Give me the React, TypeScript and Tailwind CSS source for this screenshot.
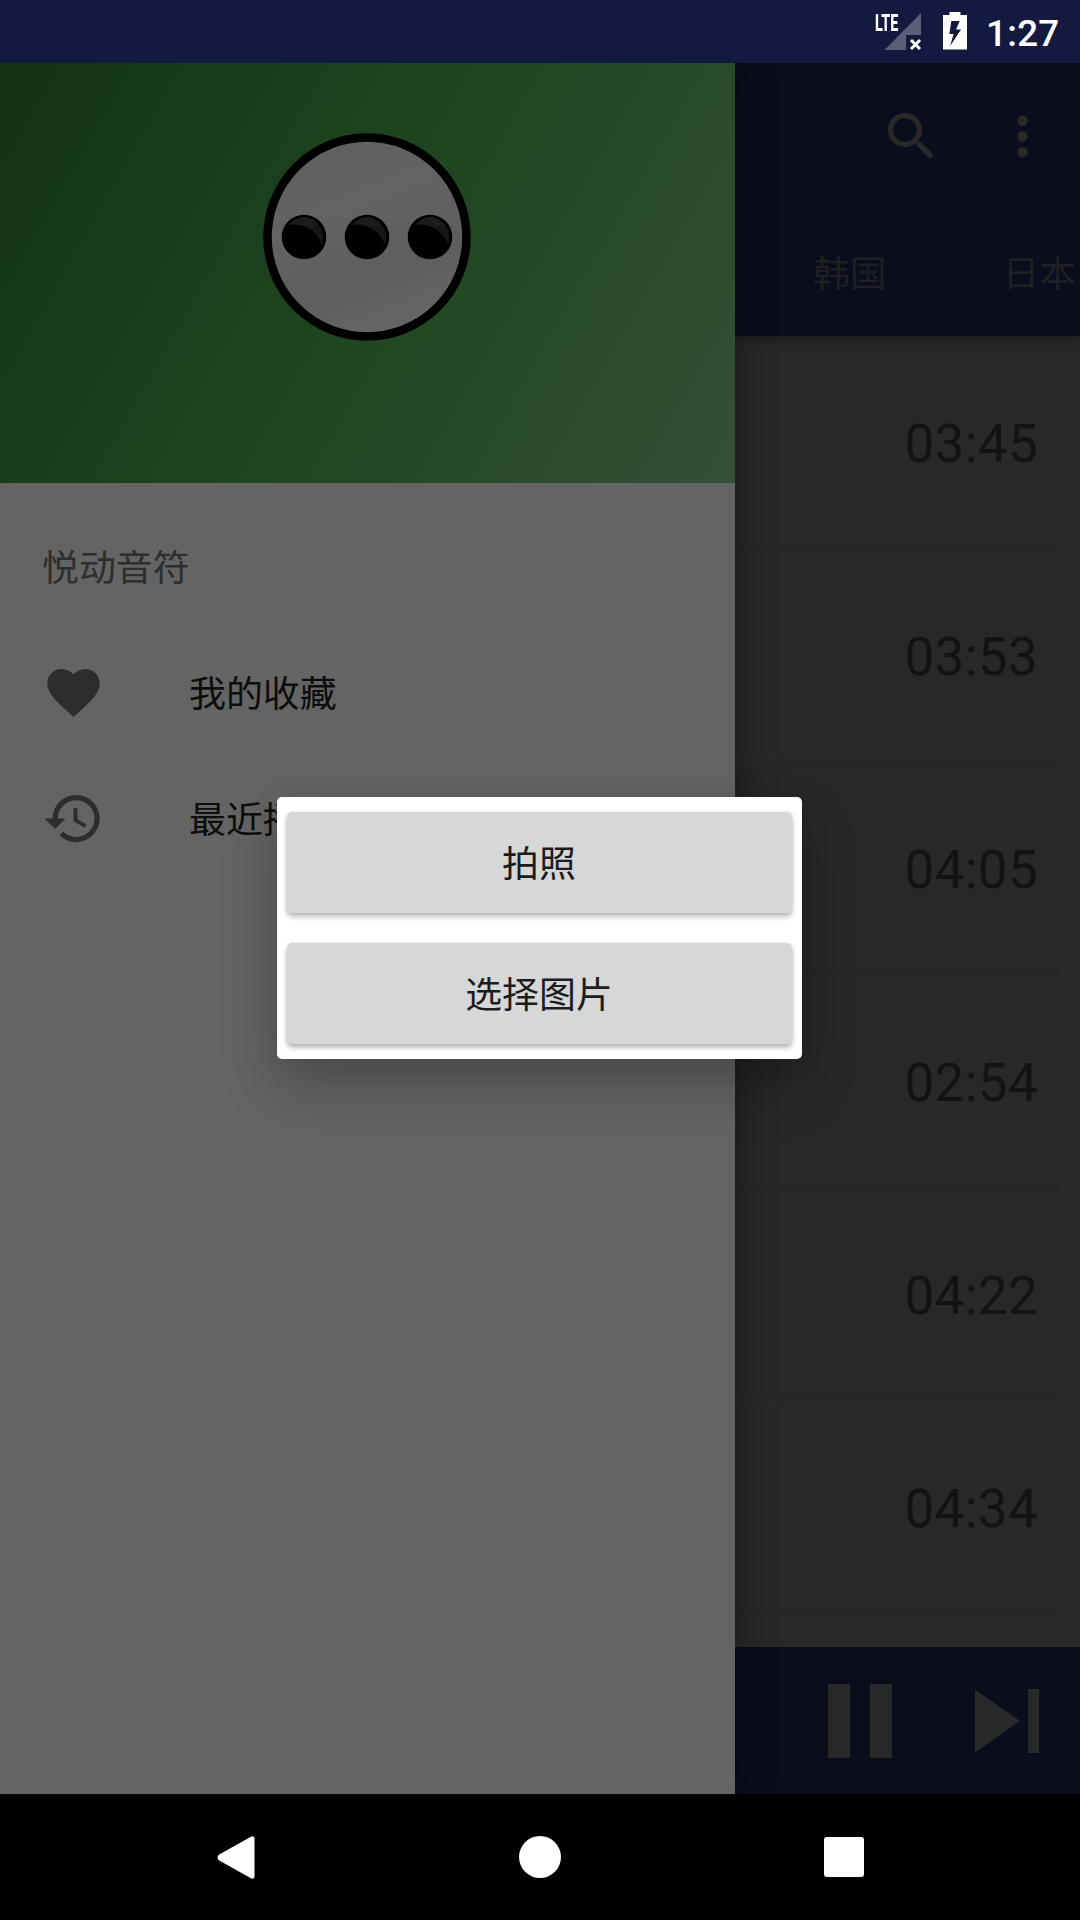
import React from "react";
import { MdFavorite, MdHistory, MdMoreVert, MdSearch } from "react-icons/md";

const durations = ["03:45", "03:53", "04:05", "02:54", "04:22", "04:34"];

function StatusBar() {
  return (
    <header className="flex h-[63px] shrink-0 items-center bg-[#141940] pl-[875px] text-white">
      <div className="relative h-[63px] w-[48px]">
        <svg className="absolute left-[9px] top-[13px]" width="38" height="38" viewBox="0 0 38 38">
          <path d="M0.500 37L37 0v22H22v15z" fill="#fff" fillOpacity="0.3" />
          <path d="M27 27l9 9M36 27l-9 9" stroke="#fff" strokeWidth="3" />
        </svg>
        <span className="absolute left-0 top-[10px] origin-left scale-x-[0.6] font-['Roboto'] text-[24px] font-extrabold leading-[26px]">
          LTE
        </span>
      </div>
      <svg className="ml-[20px] mt-[-1px]" width="24" height="38" viewBox="0 0 24 38">
        <path
          fillRule="evenodd"
          d="M6.500 0h11v3h6.500v34.500H0V3h6.500zM8.300 9L6.300 22h4.200L7.200 34L18 17.600h-4.900L16.700 9z"
          fill="#fff"
        />
      </svg>
      <span className="ml-[19px] mt-[4px] font-['Roboto'] text-[36.75px] font-medium leading-[42px] tracking-[0.3px]">
        1:27
      </span>
    </header>
  );
}

function Avatar() {
  return (
    <svg width="210" height="210" viewBox="0 0 210 210">
      <defs>
        <linearGradient id="face" x1="0.1" y1="0" x2="0.5" y2="1">
          <stop offset="0" stopColor="#5f5f5f" />
          <stop offset="0.4" stopColor="#636363" />
          <stop offset="0.75" stopColor="#5e5e5e" />
          <stop offset="1" stopColor="#656565" />
        </linearGradient>
        <linearGradient id="shine" x1="0" y1="0" x2="0.4" y2="1">
          <stop offset="0" stopColor="#222" />
          <stop offset="1" stopColor="#121212" />
        </linearGradient>
        <filter id="soften">
          <feGaussianBlur stdDeviation="0.6" />
        </filter>
      </defs>
      <circle cx="105" cy="105" r="99.500" fill="url(#face)" stroke="#000" strokeWidth="8.500" />
      {[42, 105, 168].map((cx) => (
        <g key={cx} filter="url(#soften)">
          <circle cx={cx} cy="105" r="22.300" fill="#000" />
          <path
            d={`M${cx - 15} 92.500Q${cx} 79 ${cx + 12} 90Q${cx + 22} 99 ${cx + 18} 113Q${cx + 10} 91 ${cx - 15} 92.500z`}
            fill="url(#shine)"
          />
        </g>
      ))}
    </svg>
  );
}

function Drawer() {
  return (
    <aside className="z-10 flex w-[735px] shrink-0 flex-col bg-[#646464] shadow-[0_0_36px_rgba(0,0,0,0.4)]">
      <div className="flex h-[420px] justify-center bg-[linear-gradient(119.74deg,#123214,#1e4620_50%,#345035)] pr-[1px] pt-[69px]">
        <Avatar />
      </div>
      <h2 className="mt-[20px] flex h-[126px] items-center pl-[42px] text-[36.9px] text-[#2e2e2e]">悦动音符</h2>
      <nav className="text-[#0d0d0d]">
        <a className="flex h-[126px] items-center gap-[84px] pl-[42px]">
          <MdFavorite size={63} color="#2d2d2d" />
          <span className="text-[36.9px]">我的收藏</span>
        </a>
        <a className="flex h-[126px] items-center gap-[84px] pl-[42px]">
          <MdHistory size={63} color="#2d2d2d" />
          <span className="text-[36.9px]">最近播放</span>
        </a>
      </nav>
    </aside>
  );
}

function Library() {
  return (
    <main className="flex min-w-0 flex-1 flex-col bg-[#282828]">
      <div className="z-[1] h-[273px] shrink-0 bg-[#0a0d1c] shadow-[0_2px_10px_rgba(0,0,0,0.4)]">
        <div className="flex h-[147px] items-center justify-end gap-[48px] pr-[26px] text-[#292929]">
          <MdSearch size={63} />
          <MdMoreVert size={63} />
        </div>
        <div className="flex h-[126px] items-center gap-[116px] overflow-hidden whitespace-nowrap pb-[2px] pl-[78px] text-[36.75px] text-[#1f1f24]">
          <span>韩国</span>
          <span>日本</span>
        </div>
      </div>
      <ul className="flex-1 overflow-hidden pr-[21px]">
        {durations.map((time) => (
          <li
            key={time}
            className="flex h-[213px] items-center justify-end border-b-[3px] border-[#252525] pr-[21px] pt-[7px] font-['Roboto'] text-[53px] tracking-[0.3px] text-[#131313]"
          >
            {time}
          </li>
        ))}
      </ul>
      <footer className="flex h-[147px] shrink-0 items-center bg-[#0a0d1c] pl-[93px] text-[#292929]">
        <div className="flex gap-[20px]">
          <i className="h-[74px] w-[22px] bg-current" />
          <i className="h-[74px] w-[22px] bg-current" />
        </div>
        <svg className="ml-[83px]" width="64" height="64" viewBox="0 0 64 64" fill="currentColor">
          <path d="M0 0.500L45 32L0 63.500zM53 0h11v64H53z" />
        </svg>
      </footer>
    </main>
  );
}

function NavigationBar() {
  return (
    <footer className="z-20 flex h-[126px] shrink-0 items-center bg-black pl-[217px] text-white">
      <svg width="38" height="43" viewBox="0 0 38 43" fill="currentColor">
        <path d="M34 0.700C36 -0.200 37.500 0.500 37.500 3v37c0 2.500-1.500 3.200-3.500 2.200L2.200 24.500C0 23 0 20 2.200 18.500z" />
      </svg>
      <i className="ml-[264px] size-[42px] rounded-full bg-current" />
      <i className="ml-[263px] size-[40px] rounded-[3px] bg-current" />
    </footer>
  );
}

function PhotoDialog() {
  return (
    <div className="absolute left-[277px] top-[797px] z-30 flex h-[262px] w-[525px] flex-col gap-[30px] rounded-[5px] bg-white px-[10px] py-[15px] shadow-[0_28px_56px_rgba(0,0,0,0.24),0_0_30px_rgba(0,0,0,0.09)]">
      {["拍照", "选择图片"].map((label) => (
        <button
          key={label}
          className="flex h-[101px] items-center justify-center rounded-[5px] bg-[#d6d7d7] pb-[2px] pr-[1px] text-[36.9px] text-[#1c1c1c] shadow-[0_4px_5px_rgba(0,0,0,0.24),0_0_4px_rgba(0,0,0,0.12)]"
        >
          {label}
        </button>
      ))}
    </div>
  );
}

export default function App() {
  return (
    <div className="relative flex h-[1920px] w-[1080px] flex-col overflow-hidden bg-black font-['Noto_Sans_CJK_SC',sans-serif]">
      <StatusBar />
      <div className="flex min-h-0 flex-1 overflow-hidden">
        <Drawer />
        <Library />
      </div>
      <NavigationBar />
      <PhotoDialog />
    </div>
  );
}
